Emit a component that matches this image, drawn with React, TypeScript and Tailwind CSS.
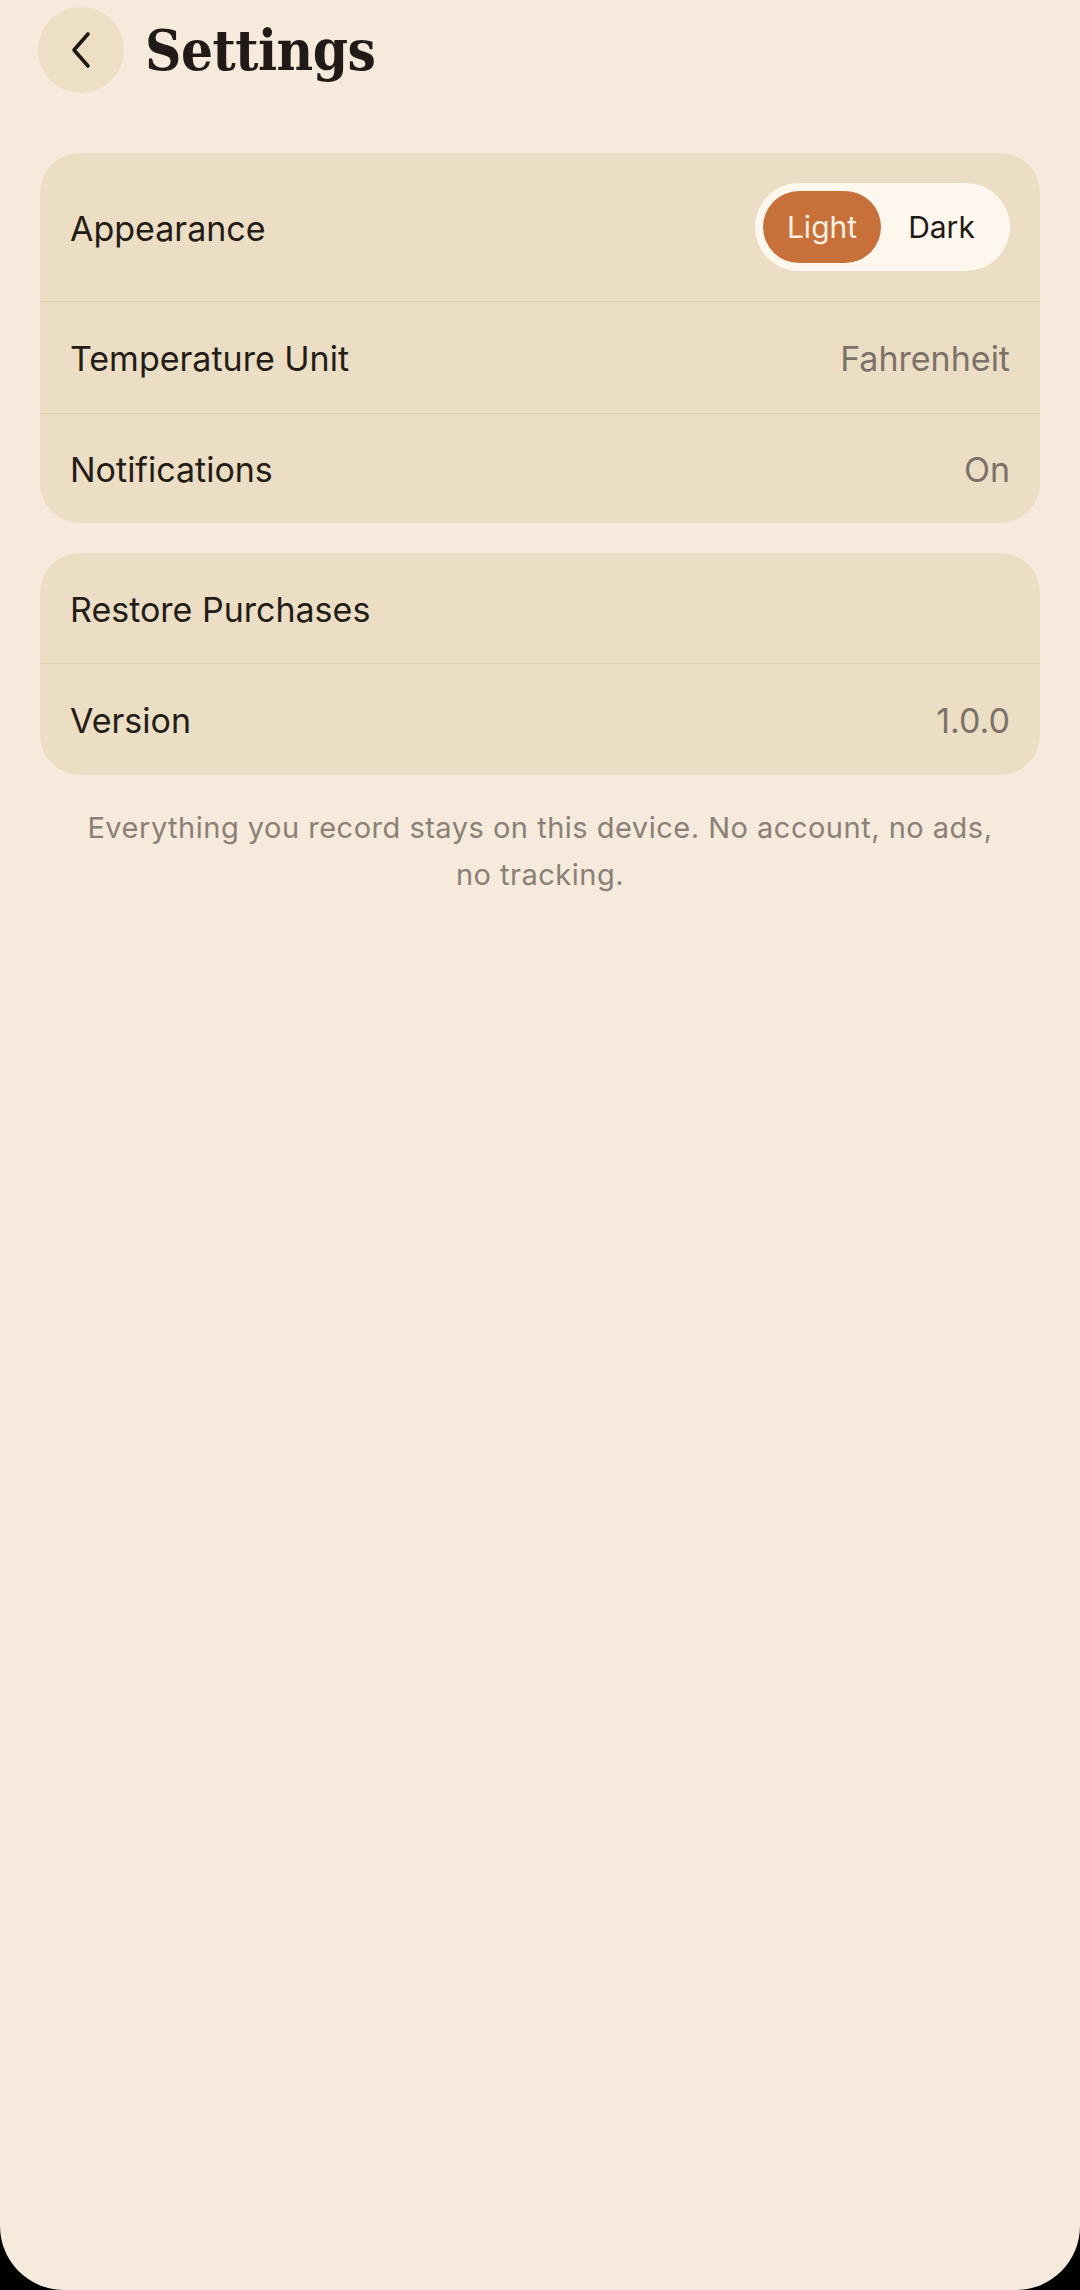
import React from "react"

const Row: React.FC<{ label: string; value?: string; className?: string; children?: React.ReactNode }> = ({
  label,
  value,
  className,
  children,
}) => {
  return (
    <div className={`flex items-center justify-between px-[30px] ${className ?? ""}`}>
      <span className="text-[34px] text-[#241c17] pt-[2px]">{label}</span>
      {value && <span className="text-[34px] text-[#7c726a] pt-[2px]">{value}</span>}
      {children}
    </div>
  )
}

export default function App() {
  return (
    <div className="h-screen bg-black" style={{ fontFamily: "Inter, 'Noto Sans', sans-serif" }}>
      <div className="h-full bg-[#f5eadb] rounded-b-[64px] overflow-hidden">
        {/* header */}
        <header className="flex items-center gap-[21px] pl-[38px] pt-[7px]">
          <button className="w-[86px] h-[86px] rounded-full bg-[#ecdfc5] flex items-center justify-center">
            <svg width="32" height="40" viewBox="0 0 32 40" fill="none">
              <path d="M23 4 L9 20 L23 36" stroke="#1f1915" strokeWidth="3.6" strokeLinecap="round" strokeLinejoin="round" />
            </svg>
          </button>
          <h1
            className="text-[56px] font-bold text-[#211a16] tracking-[-0.5px]"
            style={{ fontFamily: "'DejaVu Serif', 'Liberation Serif', serif", fontStretch: "condensed" }}
          >
            Settings
          </h1>
        </header>

        <section className="mt-[60px] mx-[40px] rounded-[40px] bg-[#ebdec4]">
          <Row label="Appearance" className="py-[30px]">
            <div className="flex items-center p-[8px] rounded-full bg-[#fdf7ee] h-[88px]">
              <span className="w-[118px] h-[72px] rounded-full bg-[#c8703a] text-[#fbeee1] text-[30px] flex items-center justify-center">
                Light
              </span>
              <span className="w-[121px] text-[30px] text-[#1f1915] flex items-center justify-center">Dark</span>
            </div>
          </Row>
          <Row label="Temperature Unit" value="Fahrenheit" className="h-[112px] border-t border-[#dfd0b3]" />
          <Row label="Notifications" value="On" className="h-[110px] border-t border-[#dfd0b3]" />
        </section>

        <section className="mt-[30px] mx-[40px] rounded-[40px] bg-[#ebdec4]">
          <Row label="Restore Purchases" className="h-[110px]" />
          <Row label="Version" value="1.0.0" className="h-[112px] border-t border-[#dfd0b3]" />
        </section>

        <p className="mt-[29px] px-[84px] text-center text-[29px] leading-[47px] tracking-[0.5px] text-[#8a8077]">
          Everything you record stays on this device. No account, no ads, no tracking.
        </p>
      </div>
    </div>
  )
}
